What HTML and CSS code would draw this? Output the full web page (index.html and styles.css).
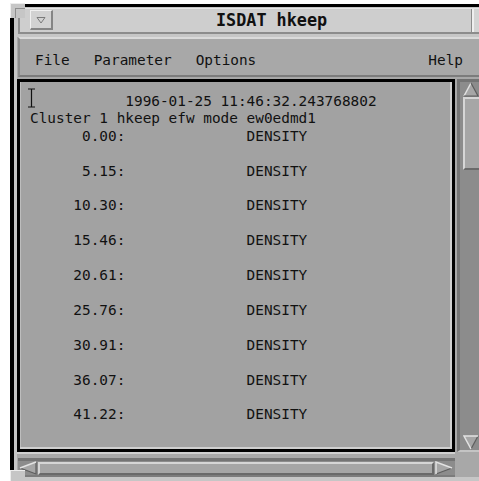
FILE: index.html
```html
<!DOCTYPE html>
<html>
<head>
<meta charset="utf-8">
<title>ISDAT hkeep</title>
<link rel="stylesheet" href="styles.css">
</head>
<body>
<div class="window">
  <div class="corner corner-tl"></div>
  <div class="corner corner-bl"></div>
  <div class="titlebar">
    <div class="wm-menu">
      <svg width="10" height="8" viewBox="0 0 10 8"><path d="M1 1.5H9L5 7Z" fill="none" stroke="#7a7a7a" stroke-width="1"/></svg>
    </div>
    <div class="title">ISDAT hkeep</div>
    <div class="wm-min"></div>
  </div>
  <div class="client">
    <div class="menubar">
      <span class="menu">File</span>
      <span class="menu">Parameter</span>
      <span class="menu">Options</span>
      <span class="menu help">Help</span>
    </div>
    <div class="work">
      <div class="textpane">
        <svg class="cursor" width="9" height="20" viewBox="0 0 9 20"><path d="M1 1H8M4.5 1V19M1 19H8" stroke="#111" stroke-width="1.2" fill="none"/></svg>
<pre class="text">           1996-01-25 11:46:32.243768802
Cluster 1 hkeep efw mode ew0edmd1
      0.00:              DENSITY

      5.15:              DENSITY

     10.30:              DENSITY

     15.46:              DENSITY

     20.61:              DENSITY

     25.76:              DENSITY

     30.91:              DENSITY

     36.07:              DENSITY

     41.22:              DENSITY
</pre>
      </div>
      <div class="vscroll">
        <svg class="arrow" width="16" height="15" viewBox="0 0 16 15"><path d="M8 1L1 14H15Z" fill="#a6a6a6"/><path d="M1 14L8 1" stroke="#e2e2e2" stroke-width="1.5"/><path d="M8 1L15 14H1" stroke="#5e5e5e" stroke-width="1.2" fill="none"/></svg>
        <div class="slider vslider"></div>
        <div class="trough-fill"></div>
        <svg class="arrow" width="16" height="15" viewBox="0 0 16 15"><path d="M1 1H15L8 14Z" fill="#a6a6a6"/><path d="M8 14L15 1" stroke="#5e5e5e" stroke-width="1.2"/><path d="M8 14L1 1H15" stroke="#e2e2e2" stroke-width="1.5" fill="none"/></svg>
      </div>
      <div class="hscroll">
        <svg class="arrow" width="18" height="14" viewBox="0 0 18 14"><path d="M1 7L17 1V13Z" fill="#a6a6a6"/><path d="M1 7L17 13V1" stroke="#5e5e5e" stroke-width="1.2" fill="none"/><path d="M1 7L17 1" stroke="#e2e2e2" stroke-width="1.5"/></svg>
        <div class="slider hslider"></div>
        <svg class="arrow" width="18" height="14" viewBox="0 0 18 14"><path d="M17 7L1 1V13Z" fill="#a6a6a6"/><path d="M17 7L1 13" stroke="#5e5e5e" stroke-width="1.2"/><path d="M1 13V1L17 7" stroke="#e2e2e2" stroke-width="1.5" fill="none"/></svg>
      </div>
    </div>
  </div>
</div>
</body>
</html>
```

FILE: styles.css
```css
html, body {
  margin: 0;
  padding: 0;
}

body {
  background: #ffffff;
  width: 479px;
  height: 481px;
  overflow: hidden;
  font-family: "DejaVu Sans Mono", "Liberation Mono", monospace;
  color: #111111;
}

/* window manager frame */
.window {
  position: relative;
  box-sizing: border-box;
  width: 480px;
  height: 500px;
  margin: 4px 0 0 10px;
  padding: 1px 0 0 3px;
  border-top: 3px solid #000000;
  border-left: 4px solid #000000;
  background: #c6c6c6;
}

.corner {
  position: absolute;
  box-sizing: border-box;
  width: 15px;
  height: 15px;
  left: -4px;
  background: #c6c6c6;
  border-top: 1px solid #ededed;
  border-left: 1px solid #ededed;
}

.corner-tl {
  top: -4px;
}

.corner-tl::after {
  content: "";
  position: absolute;
  right: 0;
  bottom: 0;
  width: 9px;
  height: 9px;
  border-top: 1px solid #8e8e8e;
  border-left: 1px solid #8e8e8e;
}

.corner-bl {
  top: 463px;
  height: 14px;
}

.titlebar {
  display: flex;
  box-sizing: border-box;
  height: 26px;
  margin: 0 0 3px 1px;
  border-top: 1px solid #e8e8e8;
  border-left: 2px solid #8c8c8c;
  border-bottom: 2px solid #8c8c8c;
  background: #cecece;
}

.wm-menu {
  box-sizing: border-box;
  width: 23px;
  height: 20px;
  margin: 1px 0 0 10px;
  border-top: 1px solid #f0f0f0;
  border-left: 1px solid #f0f0f0;
  border-right: 2px solid #858585;
  border-bottom: 2px solid #858585;
  background: #d2d2d2;
  display: flex;
  align-items: center;
  justify-content: center;
}

.title {
  box-sizing: border-box;
  width: 419px;
  padding-left: 163px;
  border-right: 1px solid #8c8c8c;
  font-weight: bold;
  font-size: 16.8px;
  line-height: 22px;
  white-space: nowrap;
}

.wm-min {
  flex: 1;
  border-left: 2px solid #efefef;
  background: #d4d4d4;
}

/* application window */
.client {
  width: 464px;
  background: #a8a8a8;
}

.menubar {
  display: flex;
  align-items: center;
  box-sizing: border-box;
  height: 40px;
  margin-left: 1px;
  padding: 5px 6px 0 3px;
  border-top: 2px solid #dadada;
  border-left: 2px solid #8c8c8c;
  border-bottom: 2px solid #7c7c7c;
  background: #a8a8a8;
  font-size: 14.4px;
}

.menu {
  padding: 0 12px;
  line-height: 18px;
  white-space: nowrap;
}

.menu.help {
  margin-left: auto;
}

.work {
  display: grid;
  grid-template-columns: 438px 1fr;
  grid-template-rows: 373px 19px;
  column-gap: 2px;
  row-gap: 6px;
  margin-top: 2px;
}

.textpane {
  position: relative;
  box-sizing: border-box;
  border: 3px solid #000000;
  background: #a2a2a2;
  box-shadow: inset -2px -2px 0 #cfcfcf, inset 1px 0 0 #bdbdbd, 0 2px 0 #cfcfcf;
  padding: 11px 0 0 10px;
  overflow: hidden;
}

.cursor {
  position: absolute;
  left: 7px;
  top: 6px;
}

.text {
  margin: 0;
  font-family: inherit;
  font-size: 14.4px;
  line-height: 17.4px;
}

/* scrollbars */
.vscroll {
  display: flex;
  flex-direction: column;
  box-sizing: border-box;
  padding-left: 3px;
  border-top: 3px solid #747474;
  border-left: 3px solid #747474;
  border-bottom: 2px solid #c4c4c4;
  background: #8c8c8c;
}

.hscroll {
  display: flex;
  align-items: center;
  box-sizing: border-box;
  margin-left: 1px;
  padding: 0 2px 0 1px;
  gap: 1px;
  border-top: 3px solid #747474;
  border-bottom: 2px solid #7c7c7c;
  background: #8c8c8c;
}

.arrow {
  display: block;
  flex: none;
}

.slider {
  box-sizing: border-box;
  background: #a6a6a6;
  border-top: 2px solid #d6d6d6;
  border-left: 2px solid #d6d6d6;
  border-right: 2px solid #6a6a6a;
  border-bottom: 2px solid #6a6a6a;
}

.vslider {
  height: 73px;
  width: 18px;
}

.hslider {
  flex: 1;
  height: 13px;
}

.trough-fill {
  flex: 1;
}
```
